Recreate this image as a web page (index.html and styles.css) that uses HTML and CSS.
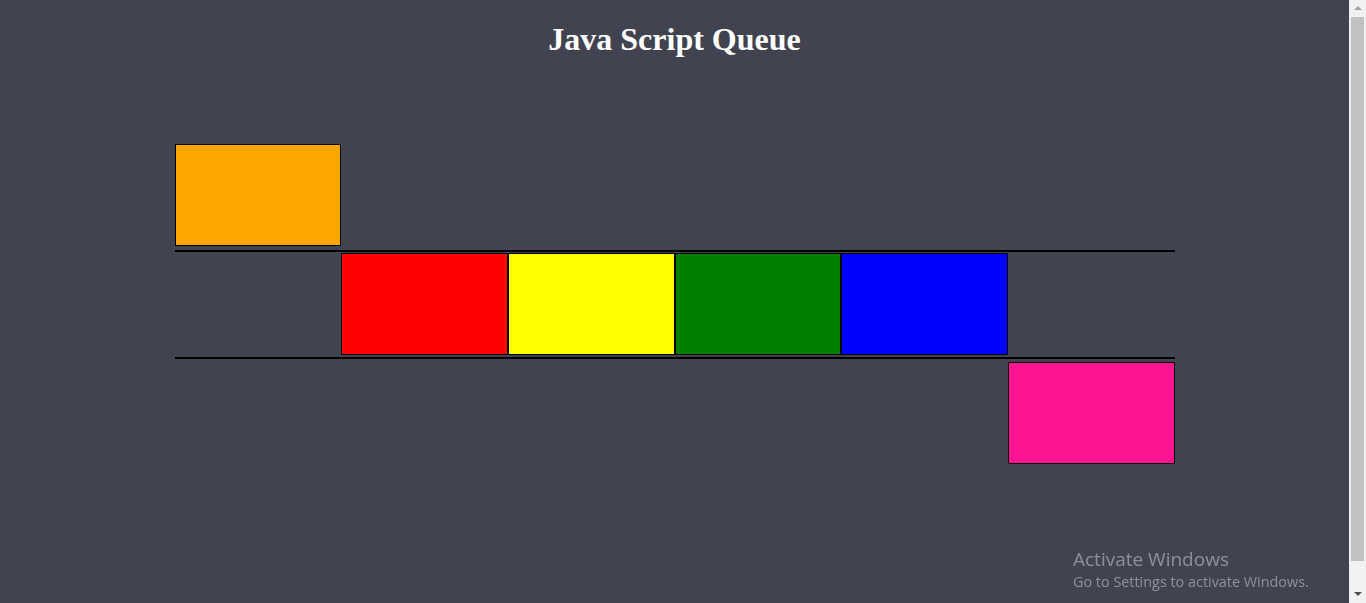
FILE: index.html
```html
<!DOCTYPE html>
<html>
  <head>
    <meta charset="utf-8" />
    <meta name="viewport" content="width=device-width, initial-scale=1">
    <title>Java Script Queue</title>
    <link rel="stylesheet" href="styles.css">
  </head>
  <body>
    <h1>Java Script Queue</h1>
    <div class="stage">
      <div class="row out">
        <div class="box orange"></div>
      </div>
      <div class="row queue">
        <div class="slot"></div>
        <div class="box red"></div>
        <div class="box yellow"></div>
        <div class="box green"></div>
        <div class="box blue"></div>
      </div>
      <div class="row incoming">
        <div class="slot"></div>
        <div class="slot"></div>
        <div class="slot"></div>
        <div class="slot"></div>
        <div class="slot"></div>
        <div class="box pink"></div>
      </div>
    </div>
    <div class="activate">
      <p class="big">Activate Windows</p>
      <p class="small">Go to Settings to activate Windows.</p>
    </div>
    <div class="scrollbar">
      <div class="arrow up"></div>
      <div class="thumb"></div>
      <div class="arrow down"></div>
    </div>
  </body>
</html>
```
FILE: styles.css
```css
html{
  background: #414350;
}
body{
  margin: 0;
  padding: 21px 17px 0 0;
  font-family: "Liberation Serif", "Times New Roman", serif;
}
h1{
  color: #fff;
  text-align: center;
  font-size: 32px;
  line-height: 37px;
  margin: 0;
}
.stage{
  width: 1000px;
  margin: 86px auto 0;
}
.row{
  display: grid;
  grid-template-columns: repeat(6, 1fr);
  height: 102px;
}
.queue{
  border-top: 2px solid #000;
  border-bottom: 2px solid #000;
  padding: 1px 0 2px;
  margin-top: 4px;
}
.incoming{
  margin-top: 3px;
}
.box{
  border: 1px solid #000;
  box-sizing: border-box;
  height: 102px;
}
.orange{ background: orange; }
.red{ background: red; }
.yellow{ background: yellow; }
.green{ background: green; }
.blue{ background: blue; }
.pink{ background: deeppink; }
.activate{
  position: fixed;
  left: 1073px;
  top: 546px;
  font-family: "Open Sans", "Noto Sans", sans-serif;
  color: rgba(255,255,255,0.4);
}
.activate p{
  margin: 0;
}
.big{
  font-size: 19px;
  line-height: 26px;
}
.small{
  font-size: 14.4px;
  line-height: 20px;
}
.scrollbar{
  position: fixed;
  top: 0;
  right: 0;
  width: 17px;
  height: 100%;
  background: #f1f1f1;
  display: flex;
  flex-direction: column;
  align-items: center;
}
.arrow{
  width: 0;
  height: 0;
  border-left: 4px solid transparent;
  border-right: 4px solid transparent;
}
.up{
  border-bottom: 4px solid #a3a3a3;
  margin: 6px 0 7px;
}
.down{
  border-top: 4px solid #505050;
  margin: auto 0 7px;
}
.thumb{
  width: 13px;
  height: 544px;
  background: #c1c1c1;
}
```
